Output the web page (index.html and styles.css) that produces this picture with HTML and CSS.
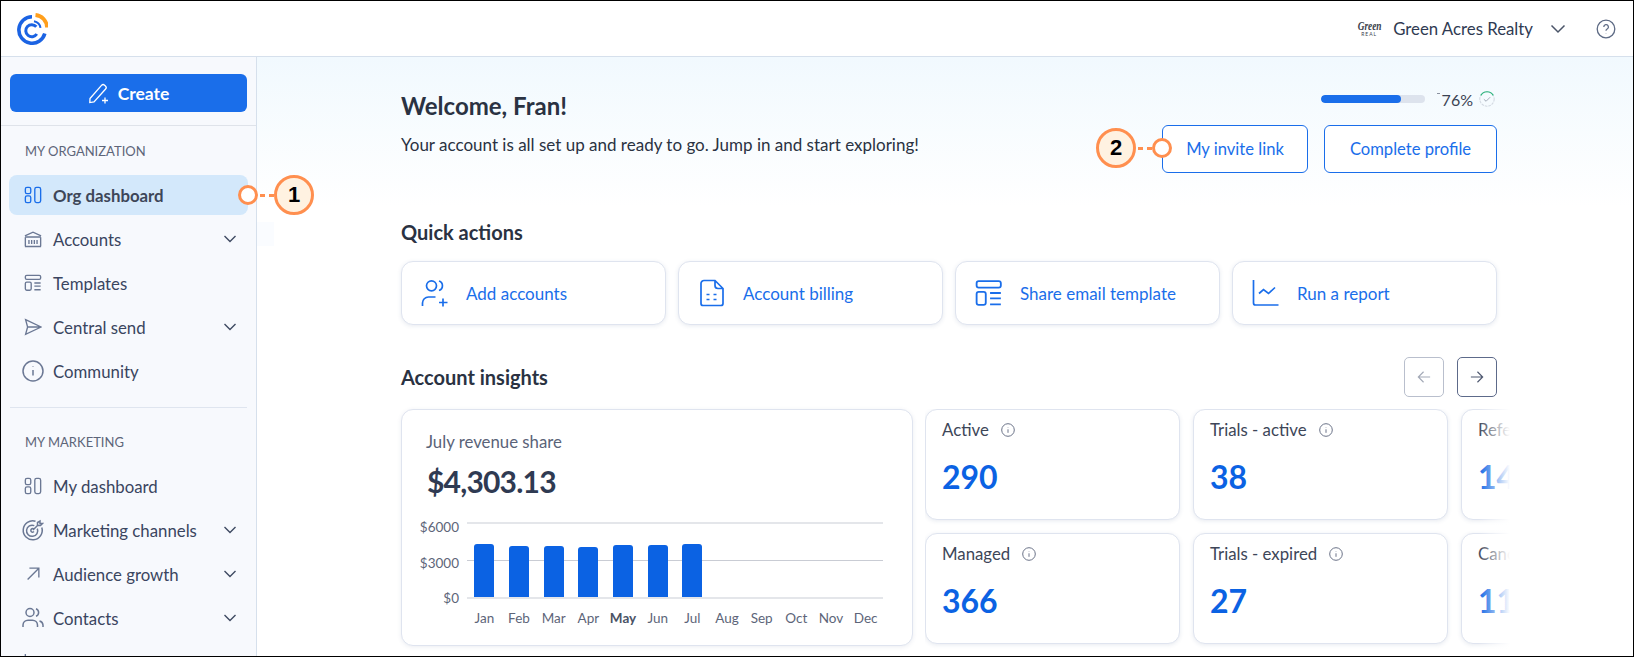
FILE: index.html
```html
<!DOCTYPE html>
<html lang="en">
<head>
<meta charset="utf-8">
<title>Org dashboard</title>
<link rel="stylesheet" href="styles.css">
</head>
<body>
<div class="frame">
  <header class="topbar">
    <svg class="logo" viewBox="0 0 32 32" fill="none">
      <path d="M16 3.800A13.200 13.200 0 1 0 28.800 20.500" stroke="#1b63e3" stroke-width="3.600"/>
      <path d="M19.500 2A12.800 12.800 0 0 1 31 14.500" stroke="#ff9f1c" stroke-width="3.800"/>
      <path d="M20.300 13.800A6 6 0 1 0 20.800 21" stroke="#1b63e3" stroke-width="3"/>
      <path d="M18 8.200A8 8 0 0 1 24.500 14.800" stroke="#1b63e3" stroke-width="2"/>
    </svg>
    <div class="account">
      <span class="brand"><span class="brand-script">Green</span><span class="brand-small">REAL</span></span>
      <span class="account-name">Green Acres Realty</span>
      <svg class="chev-top" viewBox="0 0 16 10" fill="none"><path d="M1.500 1.500 8 8l6.500-6.500"/></svg>
      <svg class="help" viewBox="0 0 20 20" fill="none"><circle cx="10" cy="10" r="8.800"/><path d="M7.800 8a2.300 2.300 0 1 1 3.400 2c-.8.5-1.200.9-1.200 1.700"/><path d="M10 14v.3"/></svg>
    </div>
  </header>
  <div class="body-row">
    <aside class="sidebar">
      <div class="create-wrap">
        <button class="create">
          <svg viewBox="0 0 22 22" fill="none"><path d="M2 16.500 13.500 3.400a2.200 2.200 0 0 1 3.100-.2l.8.7a2.200 2.200 0 0 1 .2 3.100L6 20l-4.200.6z"/><path d="M17 15.500v6M14 18.500h6"/></svg>
          Create
        </button>
      </div>
      <div class="group-title first">MY ORGANIZATION</div>
      <nav class="nav">
        <a class="nav-item active"><svg class="ni" viewBox="0 0 20 20"><rect x="1.500" y="1.500" width="6" height="7" rx="1.800"/><rect x="1.500" y="11" width="6" height="7.500" rx="1.800"/><rect x="12" y="1.500" width="6.500" height="17" rx="2"/></svg><span>Org dashboard</span></a>
        <a class="nav-item"><svg class="ni" viewBox="0 0 20 20"><path d="M1 6.500 10 2.400l9 4.100M1.500 7.800h17M1 18.300h18M5.500 11v4.500M8.500 11v4.500M11.500 11v4.500M14.500 11v4.500M1.500 8v10M18.500 8v10"/></svg><span>Accounts</span><svg class="chev" viewBox="0 0 14 10"><path d="M1.500 2 7 7.500 12.500 2"/></svg></a>
        <a class="nav-item"><svg class="ni" viewBox="0 0 20 20"><rect x="1.500" y="1.500" width="17" height="4.500" rx="1.500"/><rect x="1.500" y="9" width="6.500" height="9" rx="1.500"/><path d="M11.500 10h7M11.500 13.500h7M11.500 17.500h7"/></svg><span>Templates</span></a>
        <a class="nav-item"><svg class="ni" viewBox="0 0 20 20"><path d="M1.800 1.800 19 10 1.800 18.200 4 10zM4 10h15"/></svg><span>Central send</span><svg class="chev" viewBox="0 0 14 10"><path d="M1.500 2 7 7.500 12.500 2"/></svg></a>
        <a class="nav-item"><svg class="ni ni-lg" viewBox="0 0 22 22"><circle cx="11" cy="11" r="10"/><path d="M11 10v5.500M11 6.600v.4"/></svg><span>Community</span></a>
      </nav>
      <div class="nav-divider"></div>
      <div class="group-title">MY MARKETING</div>
      <nav class="nav">
        <a class="nav-item"><svg class="ni" viewBox="0 0 20 20"><rect x="1.500" y="1.500" width="6" height="7" rx="1.800"/><rect x="1.500" y="11" width="6" height="7.500" rx="1.800"/><rect x="12" y="1.500" width="6.500" height="17" rx="2"/></svg><span>My dashboard</span></a>
        <a class="nav-item"><svg class="ni ni-lg" viewBox="0 0 22 22"><path d="M19.800 8.500A9.500 9.500 0 1 1 13.500 2.200"/><path d="M15.300 9.600a5.600 5.600 0 1 1-3-3"/><path d="M12 10.200a1.800 1.800 0 1 0 0 2.400M11 11l5-5M15.500 3.500V6.500h3l2-2h-2.500V2z"/></svg><span>Marketing channels</span><svg class="chev" viewBox="0 0 14 10"><path d="M1.500 2 7 7.500 12.500 2"/></svg></a>
        <a class="nav-item"><svg class="ni" viewBox="0 0 20 20"><path d="M4 16 16.500 3.500M6 3.500h10.500V14"/></svg><span>Audience growth</span><svg class="chev" viewBox="0 0 14 10"><path d="M1.500 2 7 7.500 12.500 2"/></svg></a>
        <a class="nav-item"><svg class="ni ni-lg" viewBox="0 0 22 22"><circle cx="8" cy="5.500" r="4"/><path d="M14 1.800a4 4 0 0 1 0 7.500M1 20v-2a5 5 0 0 1 5-4.800h4.500A5 5 0 0 1 15.500 18v2M17.500 14a4.500 4.500 0 0 1 3.500 4v2"/></svg><span>Contacts</span><svg class="chev" viewBox="0 0 14 10"><path d="M1.500 2 7 7.500 12.500 2"/></svg></a>
        <a class="nav-item"><svg class="ni" viewBox="0 0 20 20"><path d="M1.500 1v16a1.500 1.500 0 0 0 1.500 1.500h16"/></svg></a>
      </nav>
    </aside>
    <main class="main">
      <section class="welcome">
        <div class="welcome-text">
          <h1>Welcome, Fran!</h1>
          <p>Your account is all set up and ready to go. Jump in and start exploring!</p>
        </div>
        <div class="welcome-side">
          <div class="progress-row">
            <div class="progress"><div class="progress-fill"></div></div>
            <span class="pct">76%</span>
            <svg class="ring" viewBox="0 0 20 20" fill="none"><circle class="ring-bg" cx="10" cy="10" r="8"/><path class="ring-on" d="M3.100 6A8 8 0 0 1 17 6"/><path class="ring-tick" d="M6.500 10.300 9 12.500l4.500-4.500"/></svg>
          </div>
          <div class="btn-row">
            <button class="btn">My invite link</button>
            <button class="btn btn-wide">Complete profile</button>
          </div>
        </div>
      </section>

      <h2 class="sec-title qa-title">Quick actions</h2>
      <section class="quick">
        <a class="qcard"><svg class="qi" viewBox="0 0 28 28"><circle cx="10.500" cy="6.800" r="5"/><path d="M18 2a5 5 0 0 1 0 9.500M1.500 27v-3A6 6 0 0 1 7.500 18h7M22 19.500v8M18 23.500h8.500"/></svg><span>Add accounts</span></a>
        <a class="qcard"><svg class="qi" viewBox="0 0 28 28"><path d="M17 1.500H6a3 3 0 0 0-3 3v20a2 2 0 0 0 2 2h18a2 2 0 0 0 2-2V9.500zM17 1.500v5a3 3 0 0 0 3 3h5M8.500 15.500h3M15.500 15.500h3M8.500 20.500h3M15.500 20.500h3"/></svg><span>Account billing</span></a>
        <a class="qcard"><svg class="qi" viewBox="0 0 26 26"><rect x="1.500" y="2" width="22.500" height="6" rx="2"/><rect x="1.500" y="12" width="8.500" height="12" rx="2"/><path d="M14 13h10M14 18h10M14 23.500h10"/></svg><span>Share email template</span></a>
        <a class="qcard"><svg class="qi" viewBox="0 0 28 28"><path d="M1.500 1v23a2 2 0 0 0 2 2h23"/><path d="M7 14.500l4.500-4 5 4L23 8.500"/></svg><span>Run a report</span></a>
      </section>

      <div class="insights-head">
        <h2 class="sec-title">Account insights</h2>
        <div class="arrows">
          <button class="arrow off"><svg viewBox="0 0 16 16" fill="none"><path d="M15 8H2M7.500 2 1.500 8l6 6"/></svg></button>
          <button class="arrow"><svg viewBox="0 0 16 16" fill="none"><path d="M1 8h13M8.500 2l6 6-6 6"/></svg></button>
        </div>
      </div>

      <section class="insights">
        <article class="revenue">
          <div class="rev-label">July revenue share</div>
          <div class="rev-value">$4,303.13</div>
          <div class="chart">
            <div class="y-axis"><span>$6000</span><span>$3000</span><span>$0</span></div>
            <div class="plot-col">
              <div class="plot">
                <div class="slot"><div class="bar" style="height:53px"></div></div>
                <div class="slot"><div class="bar" style="height:51px"></div></div>
                <div class="slot"><div class="bar" style="height:51px"></div></div>
                <div class="slot"><div class="bar" style="height:50.500px"></div></div>
                <div class="slot"><div class="bar" style="height:52px"></div></div>
                <div class="slot"><div class="bar" style="height:52px"></div></div>
                <div class="slot"><div class="bar" style="height:53px"></div></div>
                <div class="slot"></div><div class="slot"></div><div class="slot"></div><div class="slot"></div><div class="slot"></div>
              </div>
              <div class="months"><span>Jan</span><span>Feb</span><span>Mar</span><span>Apr</span><span class="cur">May</span><span>Jun</span><span>Jul</span><span>Aug</span><span>Sep</span><span>Oct</span><span>Nov</span><span>Dec</span></div>
            </div>
          </div>
        </article>
        <div class="stats-clip">
          <div class="stats">
            <article class="stat"><div class="stat-label">Active<svg class="inf" viewBox="0 0 14 14" fill="none"><circle cx="7" cy="7" r="6.300"/><path d="M7 6.300v3.500M7 4v.4"/></svg></div><div class="stat-val">290</div></article>
            <article class="stat"><div class="stat-label">Trials - active<svg class="inf" viewBox="0 0 14 14" fill="none"><circle cx="7" cy="7" r="6.300"/><path d="M7 6.300v3.500M7 4v.4"/></svg></div><div class="stat-val">38</div></article>
            <article class="stat"><div class="stat-label">Referrals</div><div class="stat-val">143</div></article>
            <article class="stat"><div class="stat-label">Managed<svg class="inf" viewBox="0 0 14 14" fill="none"><circle cx="7" cy="7" r="6.300"/><path d="M7 6.300v3.500M7 4v.4"/></svg></div><div class="stat-val">366</div></article>
            <article class="stat"><div class="stat-label">Trials - expired<svg class="inf" viewBox="0 0 14 14" fill="none"><circle cx="7" cy="7" r="6.300"/><path d="M7 6.300v3.500M7 4v.4"/></svg></div><div class="stat-val">27</div></article>
            <article class="stat"><div class="stat-label">Cancelled</div><div class="stat-val">11</div></article>
          </div>
          <div class="fade"></div>
        </div>
      </section>
    </main>
  </div>

  <div class="patch"></div>
  <div class="callout callout-1"><span class="dot"></span><span class="dash"></span><span class="num">1</span></div>
  <div class="callout callout-2"><span class="num">2</span><span class="dash"></span><span class="dot"></span></div>
</div>
</body>
</html>
```
FILE: styles.css
```css
* { box-sizing: border-box; }
html, body { margin: 0; padding: 0; background: #fff; }
body { font-family: "Lato", "Noto Sans", sans-serif; color: #2f3a52; overflow: hidden; }
button { font-family: inherit; cursor: pointer; }
h1, h2, p { margin: 0; }

.frame { position: relative; width: 1634px; height: 657px; border: 1px solid #000; overflow: hidden; display: flex; flex-direction: column; background: #fff; }

.topbar { flex: 0 0 56px; display: flex; align-items: center; justify-content: space-between; padding: 0 17px 0 15px; border-bottom: 1px solid #d6e0ec; background: #fff; }
.logo { width: 32px; height: 32px; }
.account { display: flex; align-items: center; }
.brand { width: 24px; margin-right: 12px; display: flex; flex-direction: column; align-items: center; color: #3a3f4c; line-height: 1; }
.brand-script { font-family: "Liberation Serif", serif; font-style: italic; font-weight: 700; font-size: 13px; line-height: 12px; transform: scaleX(.72); }
.brand-small { font-size: 5px; letter-spacing: 1px; }
.account-name { font-size: 16.800px; color: #2f3a52; }
.chev-top { width: 16px; height: 10px; margin-left: 17px; stroke: #4a5468; stroke-width: 1.500; }
.help { width: 20px; height: 20px; margin-left: 30px; stroke: #5d6a84; stroke-width: 1.300; }

.body-row { flex: 1; display: flex; min-height: 0; }
.sidebar { flex: 0 0 256px; background: #f7f9fd; border-right: 1px solid #d6e0ec; overflow: hidden; }
.create-wrap { padding: 17px 9px 13px 9px; border-bottom: 1px solid #dfe3ea; }
.create { width: 237px; height: 38px; display: flex; align-items: center; justify-content: center; gap: 8px; background: #1a6eea; color: #fff; border: 0; border-radius: 6px; font-size: 17.500px; font-weight: 700; }
.create svg { width: 22px; height: 22px; stroke: #fff; stroke-width: 1.300; }
.group-title { padding-left: 24px; font-size: 13px; color: #5d6579; line-height: 18px; margin-top: 25px; }
.group-title.first { margin-top: 16px; }
.nav { display: flex; flex-direction: column; gap: 4px; margin-top: 15px; padding: 0 8px; }
.nav-item { flex: none; height: 40px; display: flex; align-items: center; padding: 0 11px 0 15px; font-size: 16.800px; color: #3a4560; border-radius: 8px; }
.nav-item span { flex: 1; margin-left: 11px; }
.nav-item.active { background: #d3e8fb; font-weight: 700; color: #3d4658; }
.nav-item.active .ni { stroke: #1a6eea; }
.ni { width: 18px; height: 18px; flex: none; fill: none; stroke: #6b7894; stroke-width: 1.500; }
.ni-lg { width: 22px; height: 22px; margin: 0 -2px; }
.chev { width: 14px; height: 10px; fill: none; stroke: #3f4a62; stroke-width: 1.400; }
.nav-divider { height: 1px; background: #dfe5ef; margin: 16px 9px 0 9px; }

.main { flex: 1; min-width: 0; padding: 0 136px 0 144px; background: linear-gradient(#f1f9fe 0, #fff 150px); overflow: hidden; }

.welcome { display: flex; justify-content: space-between; height: 114px; }
.welcome-text { padding-top: 35px; }
.welcome h1 { font-size: 24px; font-weight: 700; line-height: 28px; color: #2a3242; }
.welcome p { font-size: 17px; margin-top: 14px; line-height: 22px; color: #2a3242; }
.welcome-side { display: flex; flex-direction: column; align-items: flex-end; padding-top: 33px; }
.progress-row { display: flex; align-items: center; height: 18px; padding-right: 1px; }
.progress { width: 104px; height: 8px; border-radius: 4px; background: #dde3ed; overflow: hidden; }
.progress-fill { width: 80px; height: 100%; border-radius: 4px; background: #1a6eea; }
.pct { position: relative; margin-left: 17px; font-size: 16px; color: #3a4252; }
.pct::before { content: ""; position: absolute; left: -5px; top: 3px; width: 3px; height: 1px; background: #8b92a0; }
.ring { width: 18px; height: 18px; margin-left: 5px; }
.ring-bg { stroke: #d3d9e2; stroke-width: 1.200; stroke-dasharray: 3 1; }
.ring-on { stroke: #2cb67d; stroke-width: 1.300; }
.ring-tick { stroke: #a3abb8; stroke-width: 1.100; }
.btn-row { display: flex; gap: 16px; margin-top: 17px; }
.btn { width: 146px; height: 48px; background: #fff; border: 1px solid #1a6eea; border-radius: 6px; color: #1a6eea; font-size: 16.600px; }
.btn-wide { width: 173px; }

.sec-title { font-size: 20px; font-weight: 700; color: #2a3242; line-height: 24px; }
.qa-title { margin-top: 49px; }
.quick { display: grid; grid-template-columns: repeat(4, 1fr); gap: 12px; margin-top: 17px; }
.qcard { height: 64px; display: flex; align-items: center; gap: 17px; padding-left: 19px; background: #fff; border: 1px solid #dfe4ef; border-radius: 12px; box-shadow: 0 1px 4px rgba(60, 80, 130, .12); color: #1a6eea; font-size: 17px; }
.qi { width: 28px; height: 28px; fill: none; stroke: #1a6eea; stroke-width: 1.700; flex: none; }

.insights-head { display: flex; justify-content: space-between; align-items: center; margin-top: 32px; height: 40px; }
.arrows { display: flex; gap: 13px; }
.arrow { width: 40px; height: 40px; padding: 0; display: flex; align-items: center; justify-content: center; background: #fff; border: 1px solid #5d6a8a; border-radius: 5px; }
.arrow svg { width: 14px; height: 14px; stroke: #4e5870; stroke-width: 1.300; }
.arrow.off { border-color: #b9bfcd; }
.arrow.off svg { stroke: #a3a9b7; }

.insights { display: flex; margin-top: 12px; gap: 12px; }
.revenue { flex: 0 0 512px; height: 237px; background: #fff; border: 1px solid #dfe4ef; border-radius: 12px; box-shadow: 0 1px 4px rgba(60, 80, 130, .1); padding: 22px 0 0 24px; }
.rev-label { font-size: 16.800px; color: #5a6378; line-height: 20px; }
.rev-value { font-size: 30px; letter-spacing: -.8px; font-weight: 700; color: #2f3a52; line-height: 38px; margin: 10px 0 0 1px; }
.chart { display: flex; margin-top: 22px; }
.y-axis { display: flex; flex-direction: column; justify-content: space-between; align-items: flex-end; flex: none; width: 34px; height: 87px; margin: -3px 8px 0 -1px; font-size: 13.500px; line-height: 16px; color: #5d6579; }
.plot-col { width: 416px; }
.plot { height: 77px; display: grid; grid-template-columns: repeat(12, 1fr); align-items: end; border-top: 2px solid #e4e6ea; border-bottom: 2px solid #e4e6ea; background: linear-gradient(#c9ccd4, #c9ccd4) 0 36px / 100% 1px no-repeat; }
.slot { display: flex; justify-content: center; align-items: flex-end; height: 100%; }
.bar { width: 20px; background: #0b62e3; border-radius: 3px 3px 0 0; }
.months { display: grid; grid-template-columns: repeat(12, 1fr); margin-top: 11px; font-size: 13.500px; line-height: 16px; text-align: center; color: #5d6579; }
.months .cur { font-weight: 700; color: #4b5366; }

.stats-clip { position: relative; width: 585px; flex: none; overflow: hidden; margin-right: -20px; height: 242px; }
.stats { display: grid; grid-template-columns: repeat(3, 255px); grid-auto-rows: 111px; gap: 13px 13px; }
.stat { background: #fff; border: 1px solid #dfe4ef; border-radius: 12px; box-shadow: 0 1px 4px rgba(60, 80, 130, .12); padding: 8px 16px; height: 111px; }
.stat-label { display: flex; align-items: center; gap: 12px; font-size: 16.800px; line-height: 24px; color: #3d4658; }
.inf { width: 14px; height: 14px; stroke: #6b7388; stroke-width: 1; }
.stat-val { font-size: 32px; font-weight: 700; color: #0b62e3; line-height: 38px; margin-top: 16px; }
.fade { position: absolute; top: 0; right: 0; bottom: 0; width: 32px; background: linear-gradient(90deg, rgba(255,255,255,0), #fff); }

.patch { position: absolute; left: 256px; top: 221px; width: 17px; height: 24px; background: #fafcff; }
.callout { position: absolute; display: flex; align-items: center; }
.callout-1 { left: 237px; top: 174px; }
.callout-2 { left: 1095px; top: 127px; }
.dot { width: 20px; height: 20px; background: #fff; border: 3px solid #ff8f4f; border-radius: 50%; }
.dash { width: 16px; height: 3px; background: repeating-linear-gradient(90deg, transparent 0 2px, #ff8f4f 2px 7px, transparent 7px 9px); }
.num { width: 40px; height: 40px; display: flex; align-items: center; justify-content: center; background: #fff2e1; border: 3px solid #ff8f4f; border-radius: 50%; font-family: "Liberation Sans", sans-serif; font-weight: 700; font-size: 22px; color: #000; }
```
